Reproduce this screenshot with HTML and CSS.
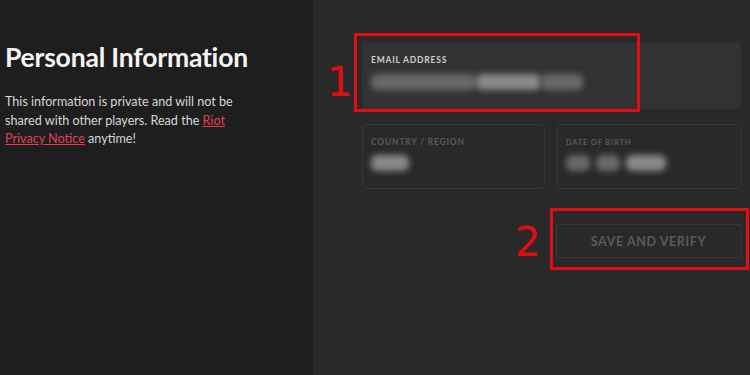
FILE: index.html
```html
<!DOCTYPE html>
<html lang="en">
<head>
    <meta charset="UTF-8">
    <meta name="viewport" content="width=device-width, initial-scale=1.0">
    <title>Account - Personal Information</title>
    <link rel="stylesheet" href="styles.css">
</head>
<body>
    <aside class="info-side">
        <h1>Personal Information</h1>
        <p>This information is private and will not be shared with other players. Read the <a href="#">Riot Privacy Notice</a> anytime!</p>
    </aside>

    <main class="form-side">
        <div class="field field-filled">
            <label>Email Address</label>
            <div class="value tight">
                <span class="blur" style="width: 105px"></span>
                <span class="blur light" style="width: 65px"></span>
                <span class="blur" style="width: 42px"></span>
            </div>
        </div>

        <div class="field-row">
            <div class="field">
                <label>Country / Region</label>
                <div class="value">
                    <span class="blur light" style="width: 38px"></span>
                </div>
            </div>
            <div class="field">
                <label class="small">Date of Birth</label>
                <div class="value">
                    <span class="blur" style="width: 24px"></span>
                    <span class="blur" style="width: 24px"></span>
                    <span class="blur light" style="width: 40px"></span>
                </div>
            </div>
        </div>

        <div class="actions">
            <button type="button" disabled>Save and Verify</button>
        </div>

        <!-- annotations -->
        <div class="mark mark-email"></div>
        <span class="step step-one">1</span>
        <div class="mark mark-save"></div>
        <span class="step step-two">2</span>
    </main>
</body>
</html>
```

FILE: styles.css
```css
body {
    margin: 0;
    width: 750px;
    height: 375px;
    display: flex;
    font-family: Lato, 'Noto Sans', sans-serif;
    background-color: #2a292a;
    overflow: hidden;
}

.info-side {
    width: 313px;
    flex-shrink: 0;
    background-color: #1f1e1f;
    padding: 41px 0 0 5px;
    box-sizing: border-box;
}

.info-side h1 {
    margin: 0;
    color: #f4f4f4;
    font-size: 26.5px;
    font-weight: 700;
    letter-spacing: -0.2px;
}

.info-side p {
    margin: 20px 0 0;
    width: 238px;
    color: #d6d6d6;
    font-size: 12.6px;
    line-height: 18.5px;
}

.info-side a {
    color: #e23f55;
    text-decoration: underline;
}

.form-side {
    position: relative;
    flex: 1;
    padding: 42px 9px 0 49px;
    display: flex;
    flex-direction: column;
}

.field {
    height: 65px;
    border: 1px solid #383738;
    border-radius: 4px;
    padding: 12px 8px 0 8px;
    box-sizing: border-box;
}

.field-filled {
    height: 67px;
    background-color: #333233;
    border-color: #333233;
    padding-top: 12px;
}

.field label {
    display: block;
    font-size: 8.5px;
    font-weight: 700;
    letter-spacing: 0.8px;
    text-transform: uppercase;
    color: #5a595a;
}

.field-filled label {
    color: #cfcfcf;
}

.field label.small {
    font-size: 7.5px;
    padding-top: 1px;
}

.value {
    display: flex;
    gap: 6px;
    margin-top: 8px;
}

.value.tight {
    gap: 0;
}

.field-filled .value {
    margin-top: 9px;
}

.blur {
    height: 16px;
    border-radius: 6px;
    background-color: #6a696a;
    filter: blur(3px);
}

.blur.light {
    background-color: #8a898a;
}

.field-row {
    display: grid;
    grid-template-columns: 183px 184px;
    justify-content: space-between;
    margin-top: 15px;
}

.actions {
    display: flex;
    justify-content: flex-end;
    margin-top: 35px;
}

.actions button {
    width: 185px;
    height: 34px;
    background: transparent;
    border: 1px solid #383738;
    color: #5b5a5b;
    font-family: inherit;
    font-size: 12.5px;
    font-weight: 700;
    letter-spacing: 0.6px;
    text-transform: uppercase;
}

.mark {
    position: absolute;
    border: 3px solid #e00d13;
    box-sizing: border-box;
}

.mark-email {
    left: 41px;
    top: 33px;
    width: 286px;
    height: 79px;
}

.mark-save {
    left: 237px;
    top: 208px;
    width: 199px;
    height: 62px;
}

.step {
    position: absolute;
    color: #e00d13;
    font-family: 'DejaVu Sans', sans-serif;
    font-size: 40px;
    line-height: 40px;
}

.step-one {
    left: 14px;
    top: 62px;
}

.step-two {
    left: 202px;
    top: 222px;
}
```
